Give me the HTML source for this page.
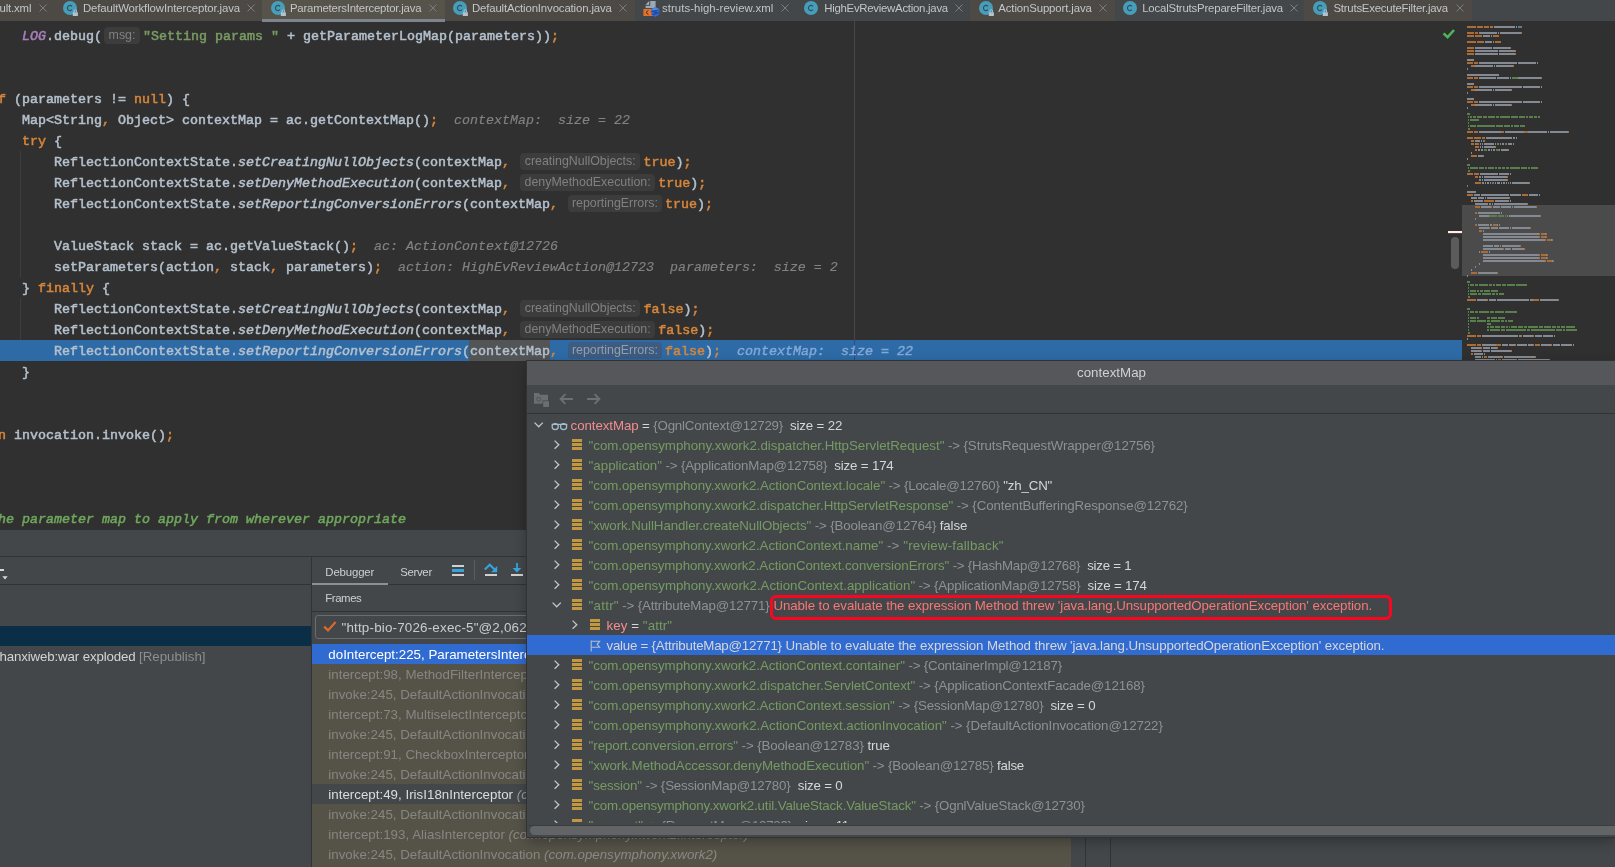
<!DOCTYPE html>
<html><head><meta charset="utf-8"><title>contextMap</title>
<style>
*{box-sizing:border-box}
html,body{margin:0;padding:0}
body{width:1615px;height:867px;overflow:hidden;background:#43474a;position:relative;font-family:"Liberation Sans",sans-serif;color:#bbb}
.abs{position:absolute}
/* tabs */
#tabs{position:absolute;left:0;top:0;width:1615px;height:21px;background:#43474a}
.tab{position:absolute;top:0;height:21px}
.tab.lib{background:#4d4a46}
.tab.act{background:#56534a}
.tl{position:absolute;top:0;height:17px;line-height:17px;font-size:11.4px;color:#c3c5c7;white-space:pre}
.tx{position:absolute;top:4px;width:8px;height:8px}
.ic{position:absolute;top:0px;width:16px;height:16px}
/* editor */
#ed{position:absolute;left:0;top:21px;width:1462px;height:509px;background:#303030;overflow:hidden}
.ln{position:absolute;left:0;height:21px;line-height:21px;white-space:pre;font-family:"Liberation Mono",monospace;font-size:13.333px;color:#b4c0cc;-webkit-text-stroke:0.5px}
.k{color:#d8863a}.s{color:#7a9b63}.p{color:#a97fbd;font-style:italic}.i{font-style:italic}
.d{color:#828282;font-style:italic;-webkit-text-stroke:0.15px}
.c{color:#6fa85c;font-style:italic;-webkit-text-stroke:0.5px}
.h{display:inline-block;vertical-align:top;height:17px;margin:1px 3px 0 2px;border-radius:4px;background:#3c3c3c;color:#808080;font-family:"Liberation Sans",sans-serif;font-size:12.4px;line-height:17px;text-align:center;-webkit-text-stroke:0;font-style:normal;overflow:hidden}
#hl{position:absolute;left:0;top:319px;width:1462px;height:21px;background:#2e6ba6}
#hl .w{position:absolute;left:469px;top:0;width:81px;height:21px;background:#525456}
#hlt .h{background:#3c5c83;color:#989ea5}
#hlt .d{color:#82a9d8;-webkit-text-stroke:0.4px}

.fr{height:20px;line-height:22px;white-space:pre;font-size:13.3px;letter-spacing:0.02px}
#pop{position:absolute;left:527px;top:361px;width:1088px;height:476px;background:#43474a;box-shadow:0 0 0 1px #303234,0 4px 12px rgba(0,0,0,.3);overflow:hidden}
#tree{position:absolute;left:0;top:53px;width:1088px;height:409px;overflow:hidden}
.tr{height:20px;line-height:22px;white-space:pre;font-size:13.3px}
#root{position:absolute;left:0;top:0;width:1615px;height:867px;overflow:hidden;will-change:transform;background:#43474a}
</style></head><body><div id="root">

<div id="tabs">
<div class="tab lib" style="left:0;width:262px"></div>
<div class="tab act" style="left:262px;width:183px"></div>
<div class="tab lib" style="left:445px;width:190px"></div>
<div class="tab lib" style="left:970px;width:145px"></div>
<div class="tab lib" style="left:1304px;width:168px"></div>
<div class="tl" style="left:-0.5px;letter-spacing:-0.16px">ult.xml</div>
<svg class="tx" style="left:39px" viewBox="0 0 8 8"><path d="M0.5 0.5L7.5 7.5M7.5 0.5L0.5 7.5" stroke="#748082" stroke-width="1" fill="none"/></svg>
<svg class="ic" style="left:61.8px" viewBox="0 0 16 16"><circle cx="8" cy="8" r="7" fill="#479eb9"/><path d="M10 6.3A2.6 2.6 0 1 0 10 9.7" fill="none" stroke="#2f4f62" stroke-width="1.15"/><rect x="10.8" y="12.3" width="5.1" height="3.8" fill="#b4c2cf"/><path d="M12.1 12.5V10.9a1.25 1.25 0 0 1 2.5 0V12.5" fill="none" stroke="#b4c2cf" stroke-width="1"/></svg>
<div class="tl" style="left:82.9px;letter-spacing:-0.113px">DefaultWorkflowInterceptor.java</div>
<svg class="tx" style="left:246.8px" viewBox="0 0 8 8"><path d="M0.5 0.5L7.5 7.5M7.5 0.5L0.5 7.5" stroke="#748082" stroke-width="1" fill="none"/></svg>
<svg class="ic" style="left:270.3px" viewBox="0 0 16 16"><circle cx="8" cy="8" r="7" fill="#479eb9"/><path d="M10 6.3A2.6 2.6 0 1 0 10 9.7" fill="none" stroke="#2f4f62" stroke-width="1.15"/><rect x="10.8" y="12.3" width="5.1" height="3.8" fill="#b4c2cf"/><path d="M12.1 12.5V10.9a1.25 1.25 0 0 1 2.5 0V12.5" fill="none" stroke="#b4c2cf" stroke-width="1"/></svg>
<div class="tl" style="left:289.9px;letter-spacing:-0.206px">ParametersInterceptor.java</div>
<svg class="tx" style="left:428.8px" viewBox="0 0 8 8"><path d="M0.5 0.5L7.5 7.5M7.5 0.5L0.5 7.5" stroke="#748082" stroke-width="1" fill="none"/></svg>
<svg class="ic" style="left:452.4px" viewBox="0 0 16 16"><circle cx="8" cy="8" r="7" fill="#479eb9"/><path d="M10 6.3A2.6 2.6 0 1 0 10 9.7" fill="none" stroke="#2f4f62" stroke-width="1.15"/><rect x="10.8" y="12.3" width="5.1" height="3.8" fill="#b4c2cf"/><path d="M12.1 12.5V10.9a1.25 1.25 0 0 1 2.5 0V12.5" fill="none" stroke="#b4c2cf" stroke-width="1"/></svg>
<div class="tl" style="left:471.9px;letter-spacing:-0.138px">DefaultActionInvocation.java</div>
<svg class="tx" style="left:618.9px" viewBox="0 0 8 8"><path d="M0.5 0.5L7.5 7.5M7.5 0.5L0.5 7.5" stroke="#748082" stroke-width="1" fill="none"/></svg>
<svg class="abs" style="left:642.5px;top:0" width="18" height="18" viewBox="0 0 18 18"><path d="M7.2 1.1H12.6V8H2.6V5.7H7.2z" fill="#9ca9b2"/><path d="M2.6 4.7L6.2 1.1V4.7z" fill="#a9b5bd"/><rect x="0.4" y="8.9" width="9.3" height="7.1" fill="#e0722e"/><path d="M5.4 10.4L3 12.5L5.4 14.6" stroke="#4a2712" stroke-width="1" fill="none"/><path d="M12.3 6.9L16.4 9.3V14.4L12.3 16.9L8.2 14.4V9.3z" fill="#3369cb"/><path d="M15.2 9.6L10 11.3L14.6 12.9L9.4 14.6" stroke="#27479c" stroke-width="1.5" fill="none"/><path d="M12.3 6.9L16.4 9.3L10.6 10.5L8.2 9.3z" fill="#4c87e2"/></svg>
<div class="tl" style="left:662px;letter-spacing:0.053px">struts-high-review.xml</div>
<svg class="tx" style="left:780.9px" viewBox="0 0 8 8"><path d="M0.5 0.5L7.5 7.5M7.5 0.5L0.5 7.5" stroke="#748082" stroke-width="1" fill="none"/></svg>
<svg class="ic" style="left:803.1px" viewBox="0 0 16 16"><circle cx="8" cy="8" r="7" fill="#479eb9"/><path d="M10 6.3A2.6 2.6 0 1 0 10 9.7" fill="none" stroke="#2f4f62" stroke-width="1.15"/></svg>
<div class="tl" style="left:824.2px;letter-spacing:-0.265px">HighEvReviewAction.java</div>
<svg class="tx" style="left:955px" viewBox="0 0 8 8"><path d="M0.5 0.5L7.5 7.5M7.5 0.5L0.5 7.5" stroke="#748082" stroke-width="1" fill="none"/></svg>
<svg class="ic" style="left:977.7px" viewBox="0 0 16 16"><circle cx="8" cy="8" r="7" fill="#479eb9"/><path d="M10 6.3A2.6 2.6 0 1 0 10 9.7" fill="none" stroke="#2f4f62" stroke-width="1.15"/><rect x="10.8" y="12.3" width="5.1" height="3.8" fill="#b4c2cf"/><path d="M12.1 12.5V10.9a1.25 1.25 0 0 1 2.5 0V12.5" fill="none" stroke="#b4c2cf" stroke-width="1"/></svg>
<div class="tl" style="left:998.3px;letter-spacing:-0.124px">ActionSupport.java</div>
<svg class="tx" style="left:1098.8px" viewBox="0 0 8 8"><path d="M0.5 0.5L7.5 7.5M7.5 0.5L0.5 7.5" stroke="#748082" stroke-width="1" fill="none"/></svg>
<svg class="ic" style="left:1121.5px" viewBox="0 0 16 16"><circle cx="8" cy="8" r="7" fill="#479eb9"/><path d="M10 6.3A2.6 2.6 0 1 0 10 9.7" fill="none" stroke="#2f4f62" stroke-width="1.15"/></svg>
<div class="tl" style="left:1142.2px;letter-spacing:-0.188px">LocalStrutsPrepareFilter.java</div>
<svg class="tx" style="left:1290px" viewBox="0 0 8 8"><path d="M0.5 0.5L7.5 7.5M7.5 0.5L0.5 7.5" stroke="#748082" stroke-width="1" fill="none"/></svg>
<svg class="ic" style="left:1311.8px" viewBox="0 0 16 16"><circle cx="8" cy="8" r="7" fill="#479eb9"/><path d="M10 6.3A2.6 2.6 0 1 0 10 9.7" fill="none" stroke="#2f4f62" stroke-width="1.15"/><rect x="10.8" y="12.3" width="5.1" height="3.8" fill="#b4c2cf"/><path d="M12.1 12.5V10.9a1.25 1.25 0 0 1 2.5 0V12.5" fill="none" stroke="#b4c2cf" stroke-width="1"/></svg>
<div class="tl" style="left:1333.4px;letter-spacing:-0.211px">StrutsExecuteFilter.java</div>
<svg class="tx" style="left:1455.6px" viewBox="0 0 8 8"><path d="M0.5 0.5L7.5 7.5M7.5 0.5L0.5 7.5" stroke="#748082" stroke-width="1" fill="none"/></svg>
</div>
<div id="ed">
<div class="abs" style="left:854px;top:0;width:1px;height:319px;background:#474747"></div>
<div class="abs" style="left:20px;top:130px;width:1px;height:126px;background:#3d3d3d"></div>
<div class="abs" style="left:20px;top:277px;width:1px;height:42px;background:#3d3d3d"></div>
<div id="hl"><div class="w"></div><div class="abs" style="left:854px;top:0;width:1px;height:21px;background:#2a4f7e"></div></div>
<div class="ln" style="top:5px;left:22px"><span class="p">LOG</span>.debug(<span class="h" style="width:36px">msg:</span><span class="s">"Setting params "</span> + getParameterLogMap(parameters))<span class="k">;</span></div>
<div class="ln" style="top:68px;left:-10px"><span class="k">if</span> (parameters != <span class="k">null</span>) {</div>
<div class="ln" style="top:89px;left:22px">Map&lt;String<span class="k">,</span> Object&gt; contextMap = ac.getContextMap()<span class="k">;</span>  <span class="d">contextMap:  size = 22</span></div>
<div class="ln" style="top:110px;left:22px"><span class="k">try</span> {</div>
<div class="ln" style="top:131px;left:54px">ReflectionContextState.<span class="i">setCreatingNullObjects</span>(contextMap<span class="k">,</span> <span class="h" style="width:120.5px">creatingNullObjects:</span><span class="k">true</span>)<span class="k">;</span></div>
<div class="ln" style="top:152px;left:54px">ReflectionContextState.<span class="i">setDenyMethodExecution</span>(contextMap<span class="k">,</span> <span class="h" style="width:135.4px">denyMethodExecution:</span><span class="k">true</span>)<span class="k">;</span></div>
<div class="ln" style="top:173px;left:54px">ReflectionContextState.<span class="i">setReportingConversionErrors</span>(contextMap<span class="k">,</span> <span class="h" style="width:94.1px">reportingErrors:</span><span class="k">true</span>)<span class="k">;</span></div>
<div class="ln" style="top:215px;left:54px">ValueStack stack = ac.getValueStack()<span class="k">;</span>  <span class="d">ac: ActionContext@12726</span></div>
<div class="ln" style="top:236px;left:54px">setParameters(action<span class="k">,</span> stack<span class="k">,</span> parameters)<span class="k">;</span>  <span class="d">action: HighEvReviewAction@12723  parameters:  size = 2</span></div>
<div class="ln" style="top:257px;left:22px">} <span class="k">finally</span> {</div>
<div class="ln" style="top:278px;left:54px">ReflectionContextState.<span class="i">setCreatingNullObjects</span>(contextMap<span class="k">,</span> <span class="h" style="width:120.5px">creatingNullObjects:</span><span class="k">false</span>)<span class="k">;</span></div>
<div class="ln" style="top:299px;left:54px">ReflectionContextState.<span class="i">setDenyMethodExecution</span>(contextMap<span class="k">,</span> <span class="h" style="width:135.4px">denyMethodExecution:</span><span class="k">false</span>)<span class="k">;</span></div>
<div id="hlt">
<div class="ln" style="top:320px;left:54px">ReflectionContextState.<span class="i">setReportingConversionErrors</span>(contextMap<span class="k">,</span> <span class="h" style="width:94.1px">reportingErrors:</span><span class="k">false</span>)<span class="k">;</span>  <span class="d">contextMap:  size = 22</span></div>
</div>
<div class="ln" style="top:341px;left:22px">}</div>
<div class="ln" style="top:404px;left:-42px"><span class="k">return</span> invocation.invoke()<span class="k">;</span></div>
<div class="ln" style="top:488px;left:-10px"><span class="c">the parameter map to apply from wherever appropriate</span></div>
</div>
<div class="abs" style="left:262px;top:19px;width:183px;height:3px;background:#7d848d"></div>
<svg class="abs" style="left:1440px;top:27px" width="18" height="14" viewBox="0 0 18 14"><path d="M3.6 6.4L7.6 10.2L14 3" fill="none" stroke="#4fb45a" stroke-width="2.6"/></svg>
<div class="abs" style="left:1448px;top:231px;width:14px;height:2px;background:#f2f2f2"></div>
<div class="abs" style="left:1448px;top:233px;width:14px;height:1px;background:#6b3a30"></div>
<div class="abs" style="left:1451px;top:237px;width:8px;height:32px;border-radius:4px;background:#5b5b5b"></div>
<svg class="abs" style="left:1462px;top:21px" width="153" height="340" viewBox="0 0 153 340" shape-rendering="crispEdges"><rect x="0" y="0" width="153" height="340" fill="#303030"/><rect x="0" y="184" width="153" height="71" fill="#4b4b4b"/><path fill="#ab6d38" d="M5 5h9v2h-9zM15 5h6v2h-6zM22 5h5v2h-5zM28 5h3v2h-3zM59 5h1v2h-1zM5 11h7v2h-7zM13 11h3v2h-3zM59 11h1v2h-1zM5 14h7v2h-7zM13 14h7v2h-7zM31 14h6v2h-6zM5 20h9v2h-9zM15 20h7v2h-7zM33 20h6v2h-6zM5 26h7v2h-7zM48 26h1v2h-1zM5 29h7v2h-7zM53 29h1v2h-1zM5 32h7v2h-7zM53 32h1v2h-1zM5 41h6v2h-6zM12 41h4v2h-4zM9 44h4v2h-4zM51 44h1v2h-1zM5 56h6v2h-6zM12 56h4v2h-4zM79 56h1v2h-1zM5 65h6v2h-6zM12 65h4v2h-4zM9 68h4v2h-4zM49 68h1v2h-1zM5 80h6v2h-6zM12 80h4v2h-4zM9 83h4v2h-4zM49 83h1v2h-1zM5 110h6v2h-6zM12 110h4v2h-4zM39 110h3v2h-3zM62 110h4v2h-4zM106 110h1v2h-1zM5 116h6v2h-6zM12 116h7v2h-7zM20 116h3v2h-3zM9 119h3v2h-3zM22 119h1v2h-1zM9 122h3v2h-3zM14 122h3v2h-3zM36 122h1v2h-1zM44 122h1v2h-1zM13 125h4v2h-4zM33 125h1v2h-1zM13 128h2v2h-2zM46 128h1v2h-1zM9 134h6v2h-6zM21 134h1v2h-1zM5 152h6v2h-6zM12 152h5v2h-5zM13 155h3v2h-3zM45 155h1v2h-1zM45 158h1v2h-1zM13 161h6v2h-6zM67 161h1v2h-1zM5 164h1v2h-1zM5 173h6v2h-6zM60 173h6v2h-6zM47 176h1v2h-1zM9 179h2v2h-2zM22 179h10v2h-10zM65 182h1v2h-1zM13 185h5v2h-5zM29 185h1v2h-1zM74 185h1v2h-1zM13 191h2v2h-2zM78 194h1v2h-1zM13 203h2v2h-2zM31 203h4v2h-4zM27 206h1v2h-1zM68 206h1v2h-1zM17 209h3v2h-3zM77 212h1v2h-1zM79 212h4v2h-4zM84 212h1v2h-1zM77 215h1v2h-1zM79 215h4v2h-4zM84 215h1v2h-1zM83 218h1v2h-1zM85 218h4v2h-4zM90 218h1v2h-1zM58 224h1v2h-1zM41 227h1v2h-1zM48 227h1v2h-1zM62 227h1v2h-1zM19 230h7v2h-7zM77 233h1v2h-1zM79 233h5v2h-5zM85 233h1v2h-1zM77 236h1v2h-1zM79 236h5v2h-5zM85 236h1v2h-1zM83 239h1v2h-1zM85 239h5v2h-5zM91 239h1v2h-1zM9 251h6v2h-6zM35 251h1v2h-1zM5 278h9v2h-9zM25 278h1v2h-1zM71 278h6v2h-6zM96 278h1v2h-1zM5 314h9v2h-9zM15 314h4v2h-4zM59 314h1v2h-1zM71 314h1v2h-1zM5 323h9v2h-9zM15 323h4v2h-4zM34 323h5v2h-5zM53 323h1v2h-1zM71 323h1v2h-1zM73 323h5v2h-5zM89 323h1v2h-1zM19 326h1v2h-1zM35 326h1v2h-1zM19 329h1v2h-1zM49 329h1v2h-1zM9 332h2v2h-2zM22 335h3v2h-3zM40 335h1v2h-1zM73 335h1v2h-1zM36 338h3v2h-3zM54 338h1v2h-1zM87 338h1v2h-1z"/><path fill="#858a92" d="M32 5h21v2h-21zM54 5h1v2h-1zM17 11h18v2h-18zM36 11h1v2h-1zM38 11h21v2h-21zM21 14h7v2h-7zM29 14h1v2h-1zM23 20h7v2h-7zM31 20h1v2h-1zM13 26h17v2h-17zM31 26h17v2h-17zM13 29h23v2h-23zM37 29h16v2h-16zM13 32h23v2h-23zM37 32h16v2h-16zM5 38h7v2h-7zM17 41h38v2h-38zM56 41h18v2h-18zM75 41h1v2h-1zM13 44h18v2h-18zM32 44h1v2h-1zM34 44h17v2h-17zM5 47h1v2h-1zM5 53h32v2h-32zM17 56h17v2h-17zM35 56h12v2h-12zM48 56h1v2h-1zM56 56h23v2h-23zM5 62h7v2h-7zM17 65h43v2h-43zM61 65h17v2h-17zM79 65h1v2h-1zM13 68h17v2h-17zM31 68h1v2h-1zM33 68h16v2h-16zM5 71h1v2h-1zM5 77h7v2h-7zM17 80h43v2h-43zM61 80h17v2h-17zM79 80h1v2h-1zM13 83h17v2h-17zM31 83h1v2h-1zM33 83h16v2h-16zM5 86h1v2h-1zM17 110h22v2h-22zM43 110h19v2h-19zM66 110h19v2h-19zM86 110h1v2h-1zM88 110h18v2h-18zM24 116h26v2h-26zM51 116h2v2h-2zM54 116h1v2h-1zM13 119h5v2h-5zM19 119h1v2h-1zM13 122h1v2h-1zM18 122h1v2h-1zM20 122h1v2h-1zM22 122h10v2h-10zM33 122h1v2h-1zM38 122h1v2h-1zM40 122h2v2h-2zM46 122h4v2h-4zM51 122h1v2h-1zM18 125h1v2h-1zM20 125h1v2h-1zM22 125h11v2h-11zM16 128h2v2h-2zM19 128h2v2h-2zM26 128h2v2h-2zM29 128h1v2h-1zM31 128h2v2h-2zM37 128h1v2h-1zM39 128h7v2h-7zM9 131h1v2h-1zM16 134h5v2h-5zM5 137h1v2h-1zM18 152h18v2h-18zM37 152h10v2h-10zM48 152h1v2h-1zM17 155h2v2h-2zM20 155h1v2h-1zM22 155h23v2h-23zM17 158h2v2h-2zM20 158h1v2h-1zM22 158h23v2h-23zM20 161h2v2h-2zM23 161h1v2h-1zM25 161h2v2h-2zM28 161h1v2h-1zM33 161h1v2h-1zM35 161h3v2h-3zM39 161h1v2h-1zM41 161h2v2h-2zM44 161h1v2h-1zM48 161h1v2h-1zM50 161h17v2h-17zM5 170h9v2h-9zM12 173h6v2h-6zM19 173h28v2h-28zM48 173h11v2h-11zM67 173h9v2h-9zM77 173h1v2h-1zM9 176h6v2h-6zM16 176h6v2h-6zM23 176h1v2h-1zM25 176h22v2h-22zM12 179h9v2h-9zM33 179h14v2h-14zM48 179h1v2h-1zM13 182h13v2h-13zM27 182h2v2h-2zM30 182h1v2h-1zM32 182h33v2h-33zM19 185h10v2h-10zM31 185h7v2h-7zM39 185h10v2h-10zM50 185h1v2h-1zM52 185h22v2h-22zM16 191h22v2h-22zM39 191h1v2h-1zM17 194h10v2h-10zM45 194h1v2h-1zM47 194h31v2h-31zM13 197h1v2h-1zM16 203h11v2h-11zM28 203h2v2h-2zM35 203h1v2h-1zM37 203h1v2h-1zM17 206h10v2h-10zM29 206h7v2h-7zM37 206h10v2h-10zM48 206h1v2h-1zM50 206h18v2h-18zM21 209h1v2h-1zM21 212h56v2h-56zM83 212h1v2h-1zM21 215h56v2h-56zM83 215h1v2h-1zM21 218h62v2h-62zM89 218h1v2h-1zM21 224h10v2h-10zM32 224h5v2h-5zM38 224h1v2h-1zM40 224h18v2h-18zM21 227h20v2h-20zM43 227h5v2h-5zM50 227h12v2h-12zM17 230h1v2h-1zM27 230h1v2h-1zM21 233h56v2h-56zM84 233h1v2h-1zM21 236h56v2h-56zM84 236h1v2h-1zM21 239h62v2h-62zM90 239h1v2h-1zM17 242h1v2h-1zM13 245h1v2h-1zM9 248h1v2h-1zM16 251h19v2h-19zM5 254h1v2h-1zM15 278h10v2h-10zM27 278h7v2h-7zM35 278h32v2h-32zM68 278h3v2h-3zM78 278h18v2h-18zM20 314h36v2h-36zM57 314h2v2h-2zM61 314h10v2h-10zM73 314h7v2h-7zM81 314h10v2h-10zM92 314h1v2h-1zM5 317h1v2h-1zM20 323h14v2h-14zM40 323h6v2h-6zM47 323h6v2h-6zM55 323h10v2h-10zM66 323h5v2h-5zM79 323h10v2h-10zM91 323h7v2h-7zM99 323h11v2h-11zM111 323h1v2h-1zM9 326h10v2h-10zM21 326h7v2h-7zM29 326h6v2h-6zM9 329h10v2h-10zM21 329h7v2h-7zM29 329h20v2h-20zM12 332h9v2h-9zM22 332h1v2h-1zM13 335h6v2h-6zM20 335h1v2h-1zM26 335h14v2h-14zM42 335h31v2h-31zM13 338h20v2h-20zM34 338h1v2h-1zM40 338h14v2h-14zM56 338h31v2h-31z"/><path fill="#59804c" d="M50 56h6v2h-6zM5 92h3v2h-3zM6 95h1v2h-1zM8 95h2v2h-2zM11 95h3v2h-3zM15 95h5v2h-5zM21 95h4v2h-4zM26 95h7v2h-7zM34 95h3v2h-3zM38 95h10v2h-10zM49 95h7v2h-7zM57 95h6v2h-6zM64 95h2v2h-2zM67 95h4v2h-4zM72 95h3v2h-3zM76 95h2v2h-2zM6 98h1v2h-1zM8 98h9v2h-9zM6 101h1v2h-1zM6 104h1v2h-1zM8 104h6v2h-6zM15 104h18v2h-18zM34 104h7v2h-7zM42 104h6v2h-6zM49 104h2v2h-2zM52 104h5v2h-5zM58 104h5v2h-5zM6 107h2v2h-2zM22 128h3v2h-3zM34 128h3v2h-3zM5 143h3v2h-3zM6 146h1v2h-1zM8 146h8v2h-8zM17 146h5v2h-5zM23 146h2v2h-2zM26 146h6v2h-6zM33 146h2v2h-2zM36 146h3v2h-3zM40 146h3v2h-3zM44 146h3v2h-3zM48 146h10v2h-10zM59 146h6v2h-6zM66 146h2v2h-2zM69 146h7v2h-7zM6 149h2v2h-2zM27 194h8v2h-8zM36 194h6v2h-6zM43 194h1v2h-1zM5 260h3v2h-3zM6 263h1v2h-1zM8 263h4v2h-4zM13 263h3v2h-3zM17 263h9v2h-9zM27 263h3v2h-3zM31 263h2v2h-2zM34 263h5v2h-5zM40 263h4v2h-4zM45 263h8v2h-8zM54 263h11v2h-11zM6 266h1v2h-1zM6 269h1v2h-1zM8 269h6v2h-6zM15 269h2v2h-2zM18 269h3v2h-3zM22 269h6v2h-6zM29 269h7v2h-7zM6 272h1v2h-1zM8 272h7v2h-7zM16 272h3v2h-3zM20 272h9v2h-9zM30 272h3v2h-3zM34 272h2v2h-2zM37 272h5v2h-5zM6 275h2v2h-2zM5 287h3v2h-3zM6 290h1v2h-1zM8 290h4v2h-4zM13 290h3v2h-3zM17 290h10v2h-10zM28 290h4v2h-4zM33 290h9v2h-9zM43 290h12v2h-12zM6 293h1v2h-1zM6 296h1v2h-1zM8 296h6v2h-6zM15 296h2v2h-2zM25 296h3v2h-3zM29 296h6v2h-6zM36 296h7v2h-7zM6 299h1v2h-1zM8 299h6v2h-6zM15 299h9v2h-9zM25 299h3v2h-3zM29 299h9v2h-9zM39 299h3v2h-3zM43 299h2v2h-2zM46 299h5v2h-5zM6 302h1v2h-1zM25 302h4v2h-4zM6 305h1v2h-1zM25 305h2v2h-2zM28 305h4v2h-4zM33 305h5v2h-5zM39 305h4v2h-4zM44 305h2v2h-2zM47 305h1v2h-1zM49 305h6v2h-6zM56 305h5v2h-5zM62 305h3v2h-3zM66 305h10v2h-10zM77 305h4v2h-4zM82 305h7v2h-7zM90 305h4v2h-4zM95 305h3v2h-3zM99 305h4v2h-4zM104 305h9v2h-9zM6 308h1v2h-1zM25 308h2v2h-2zM28 308h10v2h-10zM39 308h4v2h-4zM44 308h20v2h-20zM65 308h3v2h-3zM69 308h24v2h-24zM94 308h6v2h-6zM101 308h2v2h-2zM104 308h11v2h-11zM6 311h2v2h-2z"/><path fill="#4f7fa6" d="M56 5h3v2h-3zM21 119h1v2h-1zM35 122h1v2h-1zM43 122h1v2h-1zM30 161h2v2h-2zM46 161h1v2h-1z"/></svg>
<div class="abs" style="left:0;top:530px;width:1615px;height:337px;background:#43474a"></div>
<div class="abs" style="left:0;top:556px;width:1615px;height:1px;background:#313335"></div>
<div class="abs" style="left:0;top:584px;width:311px;height:1px;background:#313335"></div>
<div class="abs" style="left:311px;top:557px;width:1px;height:310px;background:#313335"></div>
<div class="abs" style="left:0;top:569px;width:4px;height:2px;background:#d6d6d6"></div>
<svg class="abs" style="left:2px;top:576px" width="6" height="4" viewBox="0 0 6 4"><path d="M0.3 0.3h5.4L3 3.4z" fill="#d6d6d6"/></svg>
<div class="abs" style="left:0;top:626px;width:311px;height:20px;background:#0a2e46"></div>
<div class="abs" style="left:-0.5px;top:646px;height:21px;line-height:21px;color:#d4d4d4;white-space:pre;font-size:13.3px;letter-spacing:-0.141px">hanxiweb:war exploded</div>
<div class="abs" style="left:139px;top:646px;height:21px;line-height:21px;color:#8e8e8e;white-space:pre;font-size:13.3px;letter-spacing:-0.003px">[Republish]</div>
<div class="abs" style="left:325.3px;top:561.5px;height:20px;line-height:20px;color:#cfcfcf;white-space:pre;font-size:11.4px;letter-spacing:-0.141px">Debugger</div>
<div class="abs" style="left:400.2px;top:561.5px;height:20px;line-height:20px;color:#cfcfcf;white-space:pre;font-size:11.4px;letter-spacing:-0.31px">Server</div>
<div class="abs" style="left:312px;top:583px;width:76px;height:2px;background:#8c9196"></div>
<div class="abs" style="left:388px;top:584px;width:139px;height:1px;background:#313335"></div>
<div class="abs" style="left:452px;top:565px;width:12px;height:2px;background:#d0d0d0"></div>
<div class="abs" style="left:452px;top:569px;width:12px;height:3px;background:#36a4dc"></div>
<div class="abs" style="left:452px;top:574px;width:12px;height:2px;background:#d0d0d0"></div>
<div class="abs" style="left:474px;top:560px;width:1px;height:20px;background:#5b5e60"></div>
<svg class="abs" style="left:483px;top:562px" width="16" height="16" viewBox="0 0 16 16"><path d="M1.8 7.6L6.8 2.8L11.6 7.4" fill="none" stroke="#36a4dc" stroke-width="2.1"/><path d="M14.2 4v6.2H8z" fill="#36a4dc"/><rect x="2" y="12" width="12" height="2" fill="#d0d0d0"/></svg>
<svg class="abs" style="left:509px;top:562px" width="16" height="16" viewBox="0 0 16 16"><path d="M7.1 1h1.8v5.5h-1.8z" fill="#36a4dc"/><path d="M3.6 6h8.8L8 10.6z" fill="#36a4dc"/><rect x="2" y="12" width="12" height="2" fill="#d0d0d0"/></svg>
<div class="abs" style="left:325.3px;top:588.0px;height:20px;line-height:20px;color:#cfcfcf;white-space:pre;font-size:11.4px;letter-spacing:-0.435px">Frames</div>
<div class="abs" style="left:312px;top:611px;width:215px;height:1px;background:#313335"></div>
<div class="abs" style="left:315px;top:614.8px;width:260px;height:24.2px;border:1px solid #6a6d6f;border-radius:3px;background:#43474a"></div>
<svg class="abs" style="left:322px;top:620px" width="16" height="13" viewBox="0 0 16 13"><path d="M2.2 6.6L6 10.4L13.6 2" fill="none" stroke="#d96a2c" stroke-width="2.3"/></svg>
<div class="abs" style="left:341.5px;top:617.5px;height:20px;line-height:20px;color:#cccccc;white-space:pre;font-size:13.4px;letter-spacing:0.183px">"http-bio-7026-exec-5"@2,062</div>
<div class="abs" style="left:312px;top:644px;width:759px;height:20px;background:#306bd2"></div>
<div class="abs fr" style="left:328.3px;top:644px;color:#ffffff">doIntercept:225, ParametersInterceptor</div>
<div class="abs" style="left:312px;top:664px;width:759px;height:20px;background:#555248"></div>
<div class="abs fr" style="left:328.3px;top:664px;color:#878683">intercept:98, MethodFilterInterceptor</div>
<div class="abs" style="left:312px;top:684px;width:759px;height:20px;background:#555248"></div>
<div class="abs fr" style="left:328.3px;top:684px;color:#878683">invoke:245, DefaultActionInvocation</div>
<div class="abs" style="left:312px;top:704px;width:759px;height:20px;background:#555248"></div>
<div class="abs fr" style="left:328.3px;top:704px;color:#878683">intercept:73, MultiselectInterceptor</div>
<div class="abs" style="left:312px;top:724px;width:759px;height:20px;background:#555248"></div>
<div class="abs fr" style="left:328.3px;top:724px;color:#878683">invoke:245, DefaultActionInvocation</div>
<div class="abs" style="left:312px;top:744px;width:759px;height:20px;background:#555248"></div>
<div class="abs fr" style="left:328.3px;top:744px;color:#878683">intercept:91, CheckboxInterceptor<span style="font-style:italic;color:#8a8985"> (com.opensymphony.xwork2.interceptor)</span></div>
<div class="abs" style="left:312px;top:764px;width:759px;height:20px;background:#555248"></div>
<div class="abs fr" style="left:328.3px;top:764px;color:#878683">invoke:245, DefaultActionInvocation</div>
<div class="abs" style="left:312px;top:784px;width:759px;height:20px;background:#43474a"></div>
<div class="abs fr" style="left:328.3px;top:784px;color:#dcdcdc">intercept:49, IrisI18nInterceptor<span style="font-style:italic;color:#9a9a9a"> (com.hanweb.interceptor)</span></div>
<div class="abs" style="left:312px;top:804px;width:759px;height:20px;background:#555248"></div>
<div class="abs fr" style="left:328.3px;top:804px;color:#878683">invoke:245, DefaultActionInvocation</div>
<div class="abs" style="left:312px;top:824px;width:759px;height:20px;background:#555248"></div>
<div class="abs fr" style="left:328.3px;top:824px;color:#878683">intercept:193, AliasInterceptor<span style="font-style:italic;color:#8a8985"> (com.opensymphony.xwork2.interceptor)</span></div>
<div class="abs" style="left:312px;top:844px;width:759px;height:20px;background:#555248"></div>
<div class="abs fr" style="left:328.3px;top:844px;color:#878683">invoke:245, DefaultActionInvocation<span style="font-style:italic;color:#8a8985"> (com.opensymphony.xwork2)</span></div>
<div class="abs" style="left:312px;top:864px;width:759px;height:20px;background:#555248"></div>
<div class="abs fr" style="left:328.3px;top:864px;color:#878683">intercept:249, ExceptionMappingInterceptor</div>
<div class="abs" style="left:1071px;top:644px;width:544px;height:223px;background:#43474a"></div>
<div class="abs" style="left:1085px;top:644px;width:1px;height:223px;background:#313335"></div>
<div class="abs" style="left:1110px;top:644px;width:1px;height:223px;background:#313335"></div>
<div id="pop">
<div class="abs" style="left:0;top:0;width:1089px;height:24px;background:#55575b"></div>
<div class="abs" style="left:550px;top:1.5px;height:20px;line-height:20px;color:#d0d0d0;white-space:pre;font-size:13.3px;letter-spacing:0.025px">contextMap</div>
<svg class="abs" style="left:6px;top:30px" width="18" height="18" viewBox="0 0 18 18"><path d="M1 1.9h4.6l1.6 1.8H15v9.1H1z" fill="#6b6e70"/><circle cx="5.7" cy="8.2" r="1.9" fill="none" stroke="#54575a" stroke-width="1.1"/><rect x="9.5" y="9.5" width="7" height="7" fill="#43474a"/><rect x="10.2" y="10.2" width="5.8" height="5.8" fill="#6b6e70"/></svg>
<svg class="abs" style="left:32px;top:32px" width="16" height="12" viewBox="0 0 16 12"><path d="M14 6H2M6.4 1.2L1.6 6L6.4 10.8" fill="none" stroke="#6d7072" stroke-width="1.9"/></svg>
<svg class="abs" style="left:59px;top:32px" width="16" height="12" viewBox="0 0 16 12"><path d="M1 6h12M8.6 1.2L13.4 6L8.6 10.8" fill="none" stroke="#6d7072" stroke-width="1.9"/></svg>
<div class="abs" style="left:0;top:52px;width:1089px;height:1px;background:#313335"></div>
<div id="tree">
<svg class="abs" style="left:7.2px;top:8.4px" width="10" height="6" viewBox="0 0 10 6"><path d="M0.6 0.6L4.7 4.8L8.8 0.6" fill="none" stroke="#c3c6ca" stroke-width="1.3"/></svg>
<svg class="abs" style="left:24px;top:7.5px" width="17" height="9" viewBox="0 0 17 9"><circle cx="4.2" cy="4.6" r="3.1" fill="none" stroke="#a3bccd" stroke-width="1.25"/><circle cx="12.6" cy="4.6" r="3.1" fill="none" stroke="#a3bccd" stroke-width="1.25"/><path d="M0.6 2.4H16.4" stroke="#a3bccd" stroke-width="1.2"/></svg>
<div class="abs tr" style="left:43.60000000000002px;top:1px;letter-spacing:-0.075px"><span style="color:#f48c90">contextMap</span></div>
<div class="abs tr" style="left:111.60000000000002px;top:1px;letter-spacing:-0.179px"><span style="color:#d6d6d6"> = </span><span style="color:#8f9092">{OgnlContext@12729}</span><span style="color:#d6d6d6">  size = 22</span></div>
<svg class="abs" style="left:26.799999999999955px;top:26.3px" width="6" height="10" viewBox="0 0 6 10"><path d="M0.6 0.6L4.8 4.7L0.6 8.8" fill="none" stroke="#c3c6ca" stroke-width="1.3"/></svg>
<svg class="abs" style="left:45px;top:25px" width="10" height="11" viewBox="0 0 10 11" shape-rendering="crispEdges"><rect x="0" y="0" width="10" height="3" fill="#c1973f"/><rect x="0" y="4" width="10" height="3" fill="#c1973f"/><rect x="0" y="8" width="10" height="3" fill="#c1973f"/></svg>
<div class="abs tr" style="left:61.60000000000002px;top:21px;letter-spacing:-0.014px"><span style="color:#769b62">"com.opensymphony.xwork2.dispatcher.HttpServletRequest"</span></div>
<div class="abs tr" style="left:417.4px;top:21px;letter-spacing:-0.108px"><span style="color:#8f9092"> -&gt; {StrutsRequestWrapper@12756}</span></div>
<svg class="abs" style="left:26.799999999999955px;top:46.3px" width="6" height="10" viewBox="0 0 6 10"><path d="M0.6 0.6L4.8 4.7L0.6 8.8" fill="none" stroke="#c3c6ca" stroke-width="1.3"/></svg>
<svg class="abs" style="left:45px;top:45px" width="10" height="11" viewBox="0 0 10 11" shape-rendering="crispEdges"><rect x="0" y="0" width="10" height="3" fill="#c1973f"/><rect x="0" y="4" width="10" height="3" fill="#c1973f"/><rect x="0" y="8" width="10" height="3" fill="#c1973f"/></svg>
<div class="abs tr" style="left:61.60000000000002px;top:41px;letter-spacing:0.028px"><span style="color:#769b62">"application"</span></div>
<div class="abs tr" style="left:135px;top:41px;letter-spacing:-0.175px"><span style="color:#8f9092"> -&gt; {ApplicationMap@12758}</span><span style="color:#d6d6d6">  size = 174</span></div>
<svg class="abs" style="left:26.799999999999955px;top:66.3px" width="6" height="10" viewBox="0 0 6 10"><path d="M0.6 0.6L4.8 4.7L0.6 8.8" fill="none" stroke="#c3c6ca" stroke-width="1.3"/></svg>
<svg class="abs" style="left:45px;top:65px" width="10" height="11" viewBox="0 0 10 11" shape-rendering="crispEdges"><rect x="0" y="0" width="10" height="3" fill="#c1973f"/><rect x="0" y="4" width="10" height="3" fill="#c1973f"/><rect x="0" y="8" width="10" height="3" fill="#c1973f"/></svg>
<div class="abs tr" style="left:61.60000000000002px;top:61px;letter-spacing:-0.037px"><span style="color:#769b62">"com.opensymphony.xwork2.ActionContext.locale"</span></div>
<div class="abs tr" style="left:358.1px;top:61px;letter-spacing:-0.189px"><span style="color:#8f9092"> -&gt; {Locale@12760} </span><span style="color:#d6d6d6">"zh_CN"</span></div>
<svg class="abs" style="left:26.799999999999955px;top:86.3px" width="6" height="10" viewBox="0 0 6 10"><path d="M0.6 0.6L4.8 4.7L0.6 8.8" fill="none" stroke="#c3c6ca" stroke-width="1.3"/></svg>
<svg class="abs" style="left:45px;top:85px" width="10" height="11" viewBox="0 0 10 11" shape-rendering="crispEdges"><rect x="0" y="0" width="10" height="3" fill="#c1973f"/><rect x="0" y="4" width="10" height="3" fill="#c1973f"/><rect x="0" y="8" width="10" height="3" fill="#c1973f"/></svg>
<div class="abs tr" style="left:61.60000000000002px;top:81px;letter-spacing:-0.041px"><span style="color:#769b62">"com.opensymphony.xwork2.dispatcher.HttpServletResponse"</span></div>
<div class="abs tr" style="left:426.20000000000005px;top:81px;letter-spacing:-0.11px"><span style="color:#8f9092"> -&gt; {ContentBufferingResponse@12762}</span></div>
<svg class="abs" style="left:26.799999999999955px;top:106.3px" width="6" height="10" viewBox="0 0 6 10"><path d="M0.6 0.6L4.8 4.7L0.6 8.8" fill="none" stroke="#c3c6ca" stroke-width="1.3"/></svg>
<svg class="abs" style="left:45px;top:105px" width="10" height="11" viewBox="0 0 10 11" shape-rendering="crispEdges"><rect x="0" y="0" width="10" height="3" fill="#c1973f"/><rect x="0" y="4" width="10" height="3" fill="#c1973f"/><rect x="0" y="8" width="10" height="3" fill="#c1973f"/></svg>
<div class="abs tr" style="left:61.60000000000002px;top:101px;letter-spacing:-0.071px"><span style="color:#769b62">"xwork.NullHandler.createNullObjects"</span></div>
<div class="abs tr" style="left:284.20000000000005px;top:101px;letter-spacing:-0.141px"><span style="color:#8f9092"> -&gt; {Boolean@12764} </span><span style="color:#d6d6d6">false</span></div>
<svg class="abs" style="left:26.799999999999955px;top:126.3px" width="6" height="10" viewBox="0 0 6 10"><path d="M0.6 0.6L4.8 4.7L0.6 8.8" fill="none" stroke="#c3c6ca" stroke-width="1.3"/></svg>
<svg class="abs" style="left:45px;top:125px" width="10" height="11" viewBox="0 0 10 11" shape-rendering="crispEdges"><rect x="0" y="0" width="10" height="3" fill="#c1973f"/><rect x="0" y="4" width="10" height="3" fill="#c1973f"/><rect x="0" y="8" width="10" height="3" fill="#c1973f"/></svg>
<div class="abs tr" style="left:61.60000000000002px;top:121px;letter-spacing:-0.05px"><span style="color:#769b62">"com.opensymphony.xwork2.ActionContext.name"</span></div>
<div class="abs tr" style="left:356.1px;top:121px;letter-spacing:0.168px"><span style="color:#8f9092"> -&gt; </span><span style="color:#769b62">"review-fallback"</span></div>
<svg class="abs" style="left:26.799999999999955px;top:146.3px" width="6" height="10" viewBox="0 0 6 10"><path d="M0.6 0.6L4.8 4.7L0.6 8.8" fill="none" stroke="#c3c6ca" stroke-width="1.3"/></svg>
<svg class="abs" style="left:45px;top:145px" width="10" height="11" viewBox="0 0 10 11" shape-rendering="crispEdges"><rect x="0" y="0" width="10" height="3" fill="#c1973f"/><rect x="0" y="4" width="10" height="3" fill="#c1973f"/><rect x="0" y="8" width="10" height="3" fill="#c1973f"/></svg>
<div class="abs tr" style="left:61.60000000000002px;top:141px;letter-spacing:-0.06px"><span style="color:#769b62">"com.opensymphony.xwork2.ActionContext.conversionErrors"</span></div>
<div class="abs tr" style="left:422.20000000000005px;top:141px;letter-spacing:-0.25px"><span style="color:#8f9092"> -&gt; {HashMap@12768}</span><span style="color:#d6d6d6">  size = 1</span></div>
<svg class="abs" style="left:26.799999999999955px;top:166.3px" width="6" height="10" viewBox="0 0 6 10"><path d="M0.6 0.6L4.8 4.7L0.6 8.8" fill="none" stroke="#c3c6ca" stroke-width="1.3"/></svg>
<svg class="abs" style="left:45px;top:165px" width="10" height="11" viewBox="0 0 10 11" shape-rendering="crispEdges"><rect x="0" y="0" width="10" height="3" fill="#c1973f"/><rect x="0" y="4" width="10" height="3" fill="#c1973f"/><rect x="0" y="8" width="10" height="3" fill="#c1973f"/></svg>
<div class="abs tr" style="left:61.60000000000002px;top:161px;letter-spacing:-0.01px"><span style="color:#769b62">"com.opensymphony.xwork2.ActionContext.application"</span></div>
<div class="abs tr" style="left:388.1px;top:161px;letter-spacing:-0.175px"><span style="color:#8f9092"> -&gt; {ApplicationMap@12758}</span><span style="color:#d6d6d6">  size = 174</span></div>
<svg class="abs" style="left:24.999999999999954px;top:188.4px" width="10" height="6" viewBox="0 0 10 6"><path d="M0.6 0.6L4.7 4.8L8.8 0.6" fill="none" stroke="#c3c6ca" stroke-width="1.3"/></svg>
<svg class="abs" style="left:45px;top:185px" width="10" height="11" viewBox="0 0 10 11" shape-rendering="crispEdges"><rect x="0" y="0" width="10" height="3" fill="#c1973f"/><rect x="0" y="4" width="10" height="3" fill="#c1973f"/><rect x="0" y="8" width="10" height="3" fill="#c1973f"/></svg>
<div class="abs tr" style="left:61.60000000000002px;top:181px;letter-spacing:0.257px"><span style="color:#769b62">"attr"</span></div>
<div class="abs tr" style="left:91.79999999999995px;top:181px;letter-spacing:-0.151px"><span style="color:#8f9092"> -&gt; {AttributeMap@12771}</span></div>
<svg class="abs" style="left:45.200000000000045px;top:206.3px" width="6" height="10" viewBox="0 0 6 10"><path d="M0.6 0.6L4.8 4.7L0.6 8.8" fill="none" stroke="#c3c6ca" stroke-width="1.3"/></svg>
<svg class="abs" style="left:63px;top:205px" width="10" height="11" viewBox="0 0 10 11" shape-rendering="crispEdges"><rect x="0" y="0" width="10" height="3" fill="#c1973f"/><rect x="0" y="4" width="10" height="3" fill="#c1973f"/><rect x="0" y="8" width="10" height="3" fill="#c1973f"/></svg>
<div class="abs tr" style="left:79.5px;top:201px;letter-spacing:0.083px"><span style="color:#f48c90">key</span><span style="color:#d6d6d6"> = </span><span style="color:#769b62">"attr"</span></div>
<div class="abs" style="left:0;top:221px;width:1089px;height:20px;background:#306bd2"></div>
<svg class="abs" style="left:63px;top:225.5px" width="11" height="12" viewBox="0 0 11 12"><path d="M1.2 0.5V11.5M1.2 1.3H9.6L7.2 4.3L9.6 7.3H1.2" fill="none" stroke="#b9bfc6" stroke-width="1.1"/></svg>
<div class="abs tr" style="left:79.5px;top:221px;letter-spacing:-0.228px"><span style="color:#d6d6d6">value = {AttributeMap@12771}</span></div>
<div class="abs tr" style="left:254.79999999999995px;top:221px;letter-spacing:-0.093px"><span style="color:#d6d6d6"> Unable to evaluate the expression Method threw 'java.lang.UnsupportedOperationException' exception.</span></div>
<svg class="abs" style="left:26.799999999999955px;top:246.3px" width="6" height="10" viewBox="0 0 6 10"><path d="M0.6 0.6L4.8 4.7L0.6 8.8" fill="none" stroke="#c3c6ca" stroke-width="1.3"/></svg>
<svg class="abs" style="left:45px;top:245px" width="10" height="11" viewBox="0 0 10 11" shape-rendering="crispEdges"><rect x="0" y="0" width="10" height="3" fill="#c1973f"/><rect x="0" y="4" width="10" height="3" fill="#c1973f"/><rect x="0" y="8" width="10" height="3" fill="#c1973f"/></svg>
<div class="abs tr" style="left:61.60000000000002px;top:241px;letter-spacing:-0.038px"><span style="color:#769b62">"com.opensymphony.xwork2.ActionContext.container"</span></div>
<div class="abs tr" style="left:377.9px;top:241px;letter-spacing:-0.185px"><span style="color:#8f9092"> -&gt; {ContainerImpl@12187}</span></div>
<svg class="abs" style="left:26.799999999999955px;top:266.3px" width="6" height="10" viewBox="0 0 6 10"><path d="M0.6 0.6L4.8 4.7L0.6 8.8" fill="none" stroke="#c3c6ca" stroke-width="1.3"/></svg>
<svg class="abs" style="left:45px;top:265px" width="10" height="11" viewBox="0 0 10 11" shape-rendering="crispEdges"><rect x="0" y="0" width="10" height="3" fill="#c1973f"/><rect x="0" y="4" width="10" height="3" fill="#c1973f"/><rect x="0" y="8" width="10" height="3" fill="#c1973f"/></svg>
<div class="abs tr" style="left:61.60000000000002px;top:261px;letter-spacing:-0.039px"><span style="color:#769b62">"com.opensymphony.xwork2.dispatcher.ServletContext"</span></div>
<div class="abs tr" style="left:388.1px;top:261px;letter-spacing:-0.124px"><span style="color:#8f9092"> -&gt; {ApplicationContextFacade@12168}</span></div>
<svg class="abs" style="left:26.799999999999955px;top:286.3px" width="6" height="10" viewBox="0 0 6 10"><path d="M0.6 0.6L4.8 4.7L0.6 8.8" fill="none" stroke="#c3c6ca" stroke-width="1.3"/></svg>
<svg class="abs" style="left:45px;top:285px" width="10" height="11" viewBox="0 0 10 11" shape-rendering="crispEdges"><rect x="0" y="0" width="10" height="3" fill="#c1973f"/><rect x="0" y="4" width="10" height="3" fill="#c1973f"/><rect x="0" y="8" width="10" height="3" fill="#c1973f"/></svg>
<div class="abs tr" style="left:61.60000000000002px;top:281px;letter-spacing:-0.052px"><span style="color:#769b62">"com.opensymphony.xwork2.ActionContext.session"</span></div>
<div class="abs tr" style="left:367.70000000000005px;top:281px;letter-spacing:-0.153px"><span style="color:#8f9092"> -&gt; {SessionMap@12780}</span><span style="color:#d6d6d6">  size = 0</span></div>
<svg class="abs" style="left:26.799999999999955px;top:306.3px" width="6" height="10" viewBox="0 0 6 10"><path d="M0.6 0.6L4.8 4.7L0.6 8.8" fill="none" stroke="#c3c6ca" stroke-width="1.3"/></svg>
<svg class="abs" style="left:45px;top:305px" width="10" height="11" viewBox="0 0 10 11" shape-rendering="crispEdges"><rect x="0" y="0" width="10" height="3" fill="#c1973f"/><rect x="0" y="4" width="10" height="3" fill="#c1973f"/><rect x="0" y="8" width="10" height="3" fill="#c1973f"/></svg>
<div class="abs tr" style="left:61.60000000000002px;top:301px;letter-spacing:-0.024px"><span style="color:#769b62">"com.opensymphony.xwork2.ActionContext.actionInvocation"</span></div>
<div class="abs tr" style="left:419.79999999999995px;top:301px;letter-spacing:-0.075px"><span style="color:#8f9092"> -&gt; {DefaultActionInvocation@12722}</span></div>
<svg class="abs" style="left:26.799999999999955px;top:326.3px" width="6" height="10" viewBox="0 0 6 10"><path d="M0.6 0.6L4.8 4.7L0.6 8.8" fill="none" stroke="#c3c6ca" stroke-width="1.3"/></svg>
<svg class="abs" style="left:45px;top:325px" width="10" height="11" viewBox="0 0 10 11" shape-rendering="crispEdges"><rect x="0" y="0" width="10" height="3" fill="#c1973f"/><rect x="0" y="4" width="10" height="3" fill="#c1973f"/><rect x="0" y="8" width="10" height="3" fill="#c1973f"/></svg>
<div class="abs tr" style="left:61.60000000000002px;top:321px;letter-spacing:-0.046px"><span style="color:#769b62">"report.conversion.errors"</span></div>
<div class="abs tr" style="left:211px;top:321px;letter-spacing:-0.102px"><span style="color:#8f9092"> -&gt; {Boolean@12783} </span><span style="color:#d6d6d6">true</span></div>
<svg class="abs" style="left:26.799999999999955px;top:346.3px" width="6" height="10" viewBox="0 0 6 10"><path d="M0.6 0.6L4.8 4.7L0.6 8.8" fill="none" stroke="#c3c6ca" stroke-width="1.3"/></svg>
<svg class="abs" style="left:45px;top:345px" width="10" height="11" viewBox="0 0 10 11" shape-rendering="crispEdges"><rect x="0" y="0" width="10" height="3" fill="#c1973f"/><rect x="0" y="4" width="10" height="3" fill="#c1973f"/><rect x="0" y="8" width="10" height="3" fill="#c1973f"/></svg>
<div class="abs tr" style="left:61.60000000000002px;top:341px;letter-spacing:-0.022px"><span style="color:#769b62">"xwork.MethodAccessor.denyMethodExecution"</span></div>
<div class="abs tr" style="left:342.1px;top:341px;letter-spacing:-0.181px"><span style="color:#8f9092"> -&gt; {Boolean@12785} </span><span style="color:#d6d6d6">false</span></div>
<svg class="abs" style="left:26.799999999999955px;top:366.3px" width="6" height="10" viewBox="0 0 6 10"><path d="M0.6 0.6L4.8 4.7L0.6 8.8" fill="none" stroke="#c3c6ca" stroke-width="1.3"/></svg>
<svg class="abs" style="left:45px;top:365px" width="10" height="11" viewBox="0 0 10 11" shape-rendering="crispEdges"><rect x="0" y="0" width="10" height="3" fill="#c1973f"/><rect x="0" y="4" width="10" height="3" fill="#c1973f"/><rect x="0" y="8" width="10" height="3" fill="#c1973f"/></svg>
<div class="abs tr" style="left:61.60000000000002px;top:361px;letter-spacing:-0.137px"><span style="color:#769b62">"session"</span></div>
<div class="abs tr" style="left:114.89999999999998px;top:361px;letter-spacing:-0.156px"><span style="color:#8f9092"> -&gt; {SessionMap@12780}</span><span style="color:#d6d6d6">  size = 0</span></div>
<svg class="abs" style="left:26.799999999999955px;top:386.3px" width="6" height="10" viewBox="0 0 6 10"><path d="M0.6 0.6L4.8 4.7L0.6 8.8" fill="none" stroke="#c3c6ca" stroke-width="1.3"/></svg>
<svg class="abs" style="left:45px;top:385px" width="10" height="11" viewBox="0 0 10 11" shape-rendering="crispEdges"><rect x="0" y="0" width="10" height="3" fill="#c1973f"/><rect x="0" y="4" width="10" height="3" fill="#c1973f"/><rect x="0" y="8" width="10" height="3" fill="#c1973f"/></svg>
<div class="abs tr" style="left:61.60000000000002px;top:381px;letter-spacing:-0.129px"><span style="color:#769b62">"com.opensymphony.xwork2.util.ValueStack.ValueStack"</span></div>
<div class="abs tr" style="left:388.79999999999995px;top:381px;letter-spacing:-0.166px"><span style="color:#8f9092"> -&gt; {OgnlValueStack@12730}</span></div>
<svg class="abs" style="left:26.799999999999955px;top:406.3px" width="6" height="10" viewBox="0 0 6 10"><path d="M0.6 0.6L4.8 4.7L0.6 8.8" fill="none" stroke="#c3c6ca" stroke-width="1.3"/></svg>
<svg class="abs" style="left:45px;top:405px" width="10" height="11" viewBox="0 0 10 11" shape-rendering="crispEdges"><rect x="0" y="0" width="10" height="3" fill="#c1973f"/><rect x="0" y="4" width="10" height="3" fill="#c1973f"/><rect x="0" y="8" width="10" height="3" fill="#c1973f"/></svg>
<div class="abs tr" style="left:61.60000000000002px;top:401px;letter-spacing:0.067px"><span style="color:#769b62">"request"</span></div>
<div class="abs tr" style="left:116px;top:401px;letter-spacing:-0.252px"><span style="color:#8f9092"> -&gt; {RequestMap@12789}</span><span style="color:#d6d6d6">  size = 11</span></div>
<div class="abs tr" style="left:246.39999999999998px;top:181px;color:#f87676;letter-spacing:-0.097px">Unable to evaluate the expression Method threw 'java.lang.UnsupportedOperationException' exception.</div>
<div class="abs" style="left:243px;top:181.39999999999998px;width:622px;height:24.6px;border:3px solid #fb0520;border-radius:6px"></div>
</div>
<div class="abs" style="left:0;top:463.5px;width:1089px;height:1px;background:#3b3e40"></div>
<div class="abs" style="left:3px;top:465px;width:1100px;height:8.5px;border-radius:4.5px;background:#626466"></div>
</div>
</div></body></html>
